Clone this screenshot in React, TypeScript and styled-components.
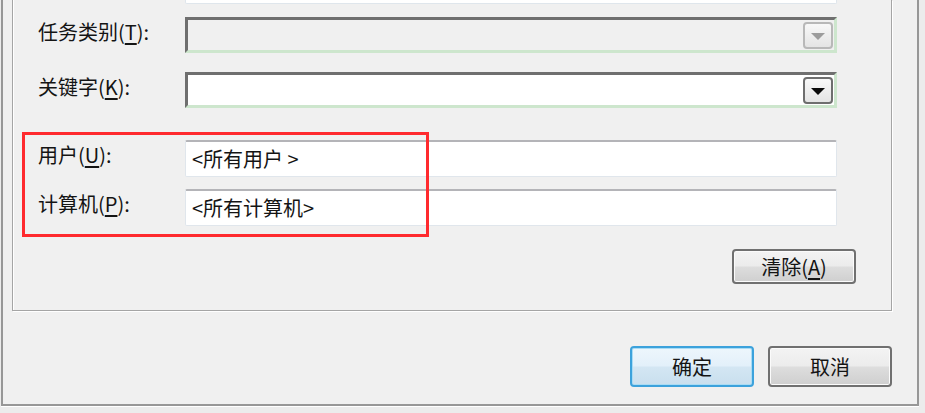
import styled, { createGlobalStyle } from 'styled-components';

const GlobalStyle = createGlobalStyle`
  html, body {
    margin: 0;
    padding: 0;
    background: #ececec;
  }
  body {
    font-family: "Noto Sans CJK SC", "Noto Sans", sans-serif;
    color: #141414;
  }
`;

const Page = styled.div`
  width: 925px;
  height: 413px;
  padding-left: 1px;
  box-sizing: border-box;
  overflow: hidden;
`;

const Dialog = styled.div`
  width: 918px;
  box-sizing: border-box;
  background: #f0f0f0;
  border: 2px solid #979797;
  border-top: none;
  box-shadow: 0 1px 0 #ffffff;
  padding: 0 25px 17px 9px;
`;

const GroupBox = styled.div`
  position: relative;
  border: 1px solid #a5a5a5;
  border-top: none;
  box-shadow: inset 1px 0 0 #ffffff, 1px 1px 0 #ffffff;
  padding-bottom: 26px;
`;

const Row = styled.div<{ $top: number; $height: number }>`
  display: grid;
  grid-template-columns: 147px 652px;
  align-items: start;
  padding-left: 25px;
  margin-top: ${(p) => p.$top}px;
  height: ${(p) => p.$height}px;
`;

const Label = styled.label`
  font-size: 20px;
  line-height: 24px;
  padding-top: 3px;
  white-space: nowrap;

  u {
    text-underline-offset: 3px;
  }
`;

const TopStub = styled.div`
  grid-column: 2;
  height: 3px;
  background: #ffffff;
  border: 1px solid #dfe6ec;
  border-top: none;
  border-radius: 0 0 2px 2px;
`;

const Combo = styled.div<{ $disabled?: boolean }>`
  display: flex;
  align-items: center;
  justify-content: flex-end;
  height: 100%;
  box-sizing: border-box;
  background: ${(p) => (p.$disabled ? '#f0f0f0' : '#ffffff')};
  border-top: 3px solid #6f6f6f;
  border-left: 3px solid #6f6f6f;
  border-bottom: 3px solid #cde6cd;
  border-right: 3px solid #cde6cd;
  padding-right: 1px;
`;

const DropButton = styled.div<{ $disabled?: boolean }>`
  width: 30px;
  height: 27px;
  box-sizing: border-box;
  border: 2px solid ${(p) => (p.$disabled ? '#b8b8b8' : '#6e6e6e')};
  border-radius: 4px;
  background: linear-gradient(#f8f8f8, #e4e4e4);
  display: flex;
  align-items: center;
  justify-content: center;
`;

const Arrow = styled.span<{ $disabled?: boolean }>`
  width: 0;
  height: 0;
  border-left: 7px solid transparent;
  border-right: 7px solid transparent;
  border-top: 7px solid ${(p) => (p.$disabled ? '#9c9c9c' : '#0a0a0a')};
  margin-top: 2px;
`;

const TextBox = styled.div`
  height: 100%;
  box-sizing: border-box;
  background: #ffffff;
  border: 1px solid #e0e6ec;
  border-top: 2px solid #b4b4b8;
  border-radius: 2px;
  padding: 4px 0 0 6px;
  font-size: 20px;
  line-height: 26px;
  white-space: nowrap;
`;

const ButtonRow = styled.div<{ $top: number; $right: number }>`
  display: flex;
  justify-content: flex-end;
  gap: 14px;
  margin-top: ${(p) => p.$top}px;
  padding-right: ${(p) => p.$right}px;
`;

const Button = styled.button<{ $default?: boolean; $height: number }>`
  width: 124px;
  height: ${(p) => p.$height}px;
  box-sizing: border-box;
  border: 2px solid ${(p) => (p.$default ? '#3ca2dc' : '#707070')};
  border-radius: 4px;
  background: ${(p) =>
    p.$default
      ? 'linear-gradient(#edf6fc 0%, #e3f0fa 48%, #d3e6f3 52%, #c9dfee 100%)'
      : 'linear-gradient(#f3f3f3 0%, #ececec 48%, #dddddd 52%, #cfcfcf 100%)'};
  box-shadow: inset 0 0 0 1px ${(p) => (p.$default ? '#a9dcf5' : '#fbfbfb')};
  font-family: "Noto Sans CJK SC", "Noto Sans", sans-serif;
  font-size: 20px;
  color: #141414;
  padding: 0;
  display: flex;
  align-items: center;
  justify-content: center;

  u {
    text-underline-offset: 3px;
  }
`;

const Highlight = styled.div`
  position: absolute;
  left: 9px;
  top: 132px;
  width: 407px;
  height: 105px;
  box-sizing: border-box;
  border: 3px solid #ff2a2e;
  pointer-events: none;
`;

const App = () => {
  return (
    <>
      <GlobalStyle />
      <Page>
        <Dialog>
          <GroupBox>
            <Row $top={0} $height={3}>
              <TopStub />
            </Row>
            <Row $top={14} $height={36}>
              <Label>
                任务类别(<u>T</u>):
              </Label>
              <Combo $disabled>
                <DropButton $disabled>
                  <Arrow $disabled />
                </DropButton>
              </Combo>
            </Row>
            <Row $top={19} $height={36}>
              <Label>
                关键字(<u>K</u>):
              </Label>
              <Combo>
                <DropButton>
                  <Arrow />
                </DropButton>
              </Combo>
            </Row>
            <Row $top={32} $height={37}>
              <Label>
                用户(<u>U</u>):
              </Label>
              <TextBox>&lt;所有用户 &gt;</TextBox>
            </Row>
            <Row $top={12} $height={37}>
              <Label>
                计算机(<u>P</u>):
              </Label>
              <TextBox>&lt;所有计算机&gt;</TextBox>
            </Row>
            <ButtonRow $top={23} $right={35}>
              <Button $height={35}>
                清除(<u>A</u>)
              </Button>
            </ButtonRow>
            <Highlight />
          </GroupBox>
          <ButtonRow $top={35} $right={0}>
            <Button $default $height={41}>
              确定
            </Button>
            <Button $height={41}>取消</Button>
          </ButtonRow>
        </Dialog>
      </Page>
    </>
  );
};

export default App;
